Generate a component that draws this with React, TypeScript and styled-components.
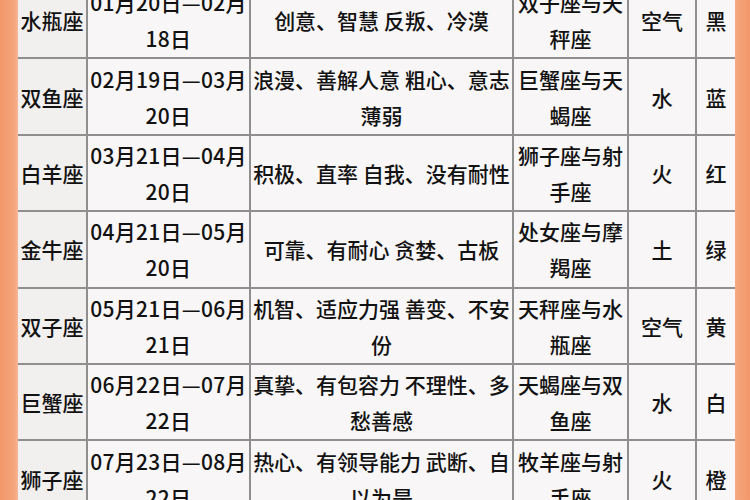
import React from 'react';
import styled, { createGlobalStyle } from 'styled-components';

const GlobalStyle = createGlobalStyle`
  html, body {
    margin: 0;
    padding: 0;
  }

  body {
    font-family: "Noto Sans CJK SC", "Noto Sans", sans-serif;
  }
`;

const Page = styled.div`
  width: 750px;
  height: 500px;
  overflow: hidden;
  box-sizing: border-box;
  padding: 0 15px 0 18px;
  background: linear-gradient(
    90deg,
    #f2986a 0,
    #f4a47c 14px,
    #f7b797 18px,
    #f7b797 733px,
    #f5a47c 737px,
    #f2976b 750px
  );
`;

const Table = styled.table`
  width: 717px;
  margin-top: -19px;
  border-collapse: collapse;
  table-layout: fixed;
  background: #f8f6f6;
`;

const Col = styled.col<{ $w: number }>`
  width: ${(p) => p.$w}px;
`;

const Cell = styled.td<{ $name?: boolean; $wide?: boolean }>`
  height: 76.4px;
  box-sizing: border-box;
  padding: 0;
  border: 2px solid #8f8f8f;
  background: ${(p) => (p.$name ? '#f2efef' : '#f8f6f6')};
  color: #121212;
  font-size: 21px;
  font-weight: 500;
  line-height: 36px;
  letter-spacing: ${(p) => (p.$wide ? '0.3px' : '0')};
  text-align: center;
  vertical-align: middle;
  white-space: pre;

  &:first-child {
    border-left: none;
  }

  &:last-child {
    border-right: none;
  }
`;

interface signType {
    name: string;
    date: string;
    trait: string;
    match: string;
    element: string;
    color: string;
}

const signs: signType[] = [
    { name: '水瓶座', date: '01月20日—02月\n18日', trait: '创意、智慧 反叛、冷漠', match: '双子座与天\n秤座', element: '空气', color: '黑' },
    { name: '双鱼座', date: '02月19日—03月\n20日', trait: '浪漫、善解人意 粗心、意志\n薄弱', match: '巨蟹座与天\n蝎座', element: '水', color: '蓝' },
    { name: '白羊座', date: '03月21日—04月\n20日', trait: '积极、直率 自我、没有耐性', match: '狮子座与射\n手座', element: '火', color: '红' },
    { name: '金牛座', date: '04月21日—05月\n20日', trait: '可靠、有耐心 贪婪、古板', match: '处女座与摩\n羯座', element: '土', color: '绿' },
    { name: '双子座', date: '05月21日—06月\n21日', trait: '机智、适应力强 善变、不安\n份', match: '天秤座与水\n瓶座', element: '空气', color: '黄' },
    { name: '巨蟹座', date: '06月22日—07月\n22日', trait: '真挚、有包容力 不理性、多\n愁善感', match: '天蝎座与双\n鱼座', element: '水', color: '白' },
    { name: '狮子座', date: '07月23日—08月\n22日', trait: '热心、有领导能力 武断、自\n以为是', match: '牧羊座与射\n手座', element: '火', color: '橙' },
];

const App = () => {
    return (
        <>
            <GlobalStyle />
            <Page>
                {/* 星座表 */}
                <Table>
                    <colgroup>
                        <Col $w={69} />
                        <Col $w={163} />
                        <Col $w={263} />
                        <Col $w={115} />
                        <Col $w={68} />
                        <Col $w={39} />
                    </colgroup>
                    <tbody>
                        {signs.map((s) => (
                            <tr key={s.name}>
                                <Cell $name>{s.name}</Cell>
                                <Cell $wide>{s.date}</Cell>
                                <Cell>{s.trait}</Cell>
                                <Cell>{s.match}</Cell>
                                <Cell>{s.element}</Cell>
                                <Cell>{s.color}</Cell>
                            </tr>
                        ))}
                    </tbody>
                </Table>
            </Page>
        </>
    );
};

export default App;
